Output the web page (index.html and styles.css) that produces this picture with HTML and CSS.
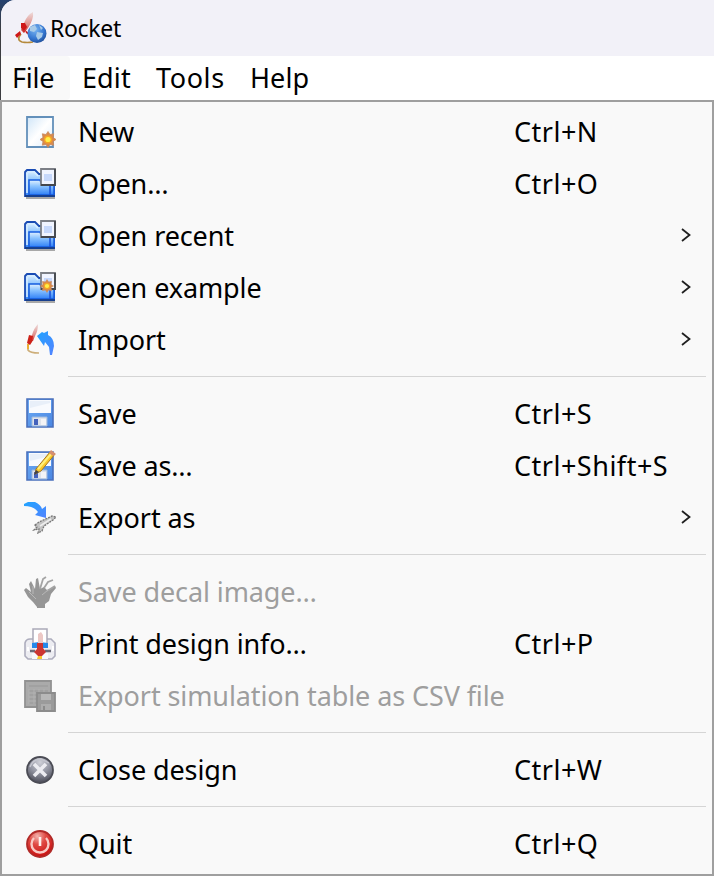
FILE: index.html
```html
<!DOCTYPE html>
<html lang="en">
<head>
<meta charset="utf-8">
<title>Rocket</title>
<link rel="stylesheet" href="styles.css">
</head>
<body>
<svg class="defs" width="0" height="0" aria-hidden="true">
  <defs>
    <linearGradient id="blue" x1="0" y1="0" x2="0" y2="1"><stop offset="0" stop-color="#e2f2ff"/><stop offset=".4" stop-color="#8cc4ff"/><stop offset="1" stop-color="#2f80f6"/></linearGradient>
    <linearGradient id="paper" x1="0" y1="0" x2="1" y2="1"><stop offset="0" stop-color="#cfe5f8"/><stop offset=".5" stop-color="#fff"/><stop offset="1" stop-color="#dcecfb"/></linearGradient>
    <linearGradient id="disk" x1="0" y1="0" x2="1" y2="1"><stop offset="0" stop-color="#6cabf4"/><stop offset="1" stop-color="#4a86e2"/></linearGradient>
    <linearGradient id="arrow" x1="0" y1="0" x2="1" y2="1"><stop offset="0" stop-color="#20a4ff"/><stop offset="1" stop-color="#5283ff"/></linearGradient>
    <linearGradient id="rocket" x1="0" y1="1" x2="0" y2="0"><stop offset="0" stop-color="#c82020"/><stop offset=".4" stop-color="#e0908a"/><stop offset="1" stop-color="#eedddd"/></linearGradient>
    <radialGradient id="grey" cx=".5" cy=".2" r=".8"><stop offset="0" stop-color="#cfd0d8"/><stop offset=".5" stop-color="#9496a3"/><stop offset="1" stop-color="#4a4b57"/></radialGradient>
    <radialGradient id="red" cx=".4" cy=".2" r=".8"><stop offset="0" stop-color="#f3b4ae"/><stop offset=".4" stop-color="#e04a44"/><stop offset="1" stop-color="#c81010"/></radialGradient>
    <radialGradient id="earth" cx=".4" cy=".3" r=".8"><stop offset="0" stop-color="#7ab6f2"/><stop offset=".6" stop-color="#3475d0"/><stop offset="1" stop-color="#1d468c"/></radialGradient>
    <g id="gear"><path d="M0-8L2-5L5.700-5.700L5-2L8 0L5 2L5.700 5.700L2 5L0 8L-2 5L-5.700 5.700L-5 2L-8 0L-5-2L-5.700-5.700L-2-5Z" fill="#d98a4c" stroke="#c88a60" stroke-width=".8"/><circle r="4" fill="#f6a623"/><circle r="2.600" fill="#fff04a"/></g>
    <g id="folder">
      <path d="M2 30H31" stroke="#a8a8a8" stroke-width="2"/>
      <path d="M1 4L3 2H11L15 6H30V28H1Z" fill="url(#blue)" stroke="#1a4cb4" stroke-width="1.800"/>
      <path d="M3 5V25M4 4H10L14 8" fill="none" stroke="#d7eeff" stroke-width="1.600"/>
      <path d="M5 27V12H16L18 17H30V27Z" fill="url(#blue)" stroke="#155ce0" stroke-width="1.500"/>
      <path d="M26 17V27" stroke="#1850d8" stroke-width="1.500"/>
      <path d="M1 28H31" stroke="#173e86" stroke-width="1.700"/>
      <path d="M17 1H31V17H17Z" fill="#f0f4ff" stroke="#7c7f86" stroke-width="1.800"/>
      <path d="M31 1V17H17" fill="none" stroke="#44474d" stroke-width="1.800"/>
      <path d="M20 6H28V13H20Z" fill="#c6d8fb"/>
    </g>
    <g id="floppy">
      <path d="M3 1H29V29H3Z" fill="url(#disk)" stroke="#4a70bc" stroke-width="1.600"/>
      <path d="M5 2H27V15H5Z" fill="#f8fafe"/>
      <path d="M6 3H26V5L6 10Z" fill="#e8eff9"/>
      <path d="M8 19H23V28H8Z" fill="#dfe3eb" stroke="#9cb8de"/>
      <path d="M10 21H14V27H10Z" fill="#4462bc"/>
      <path d="M17 21H22V27H17Z" fill="#f4f4f6"/>
    </g>
  </defs>
</svg>

<div class="desktop">
<div class="window">
  <header class="titlebar">
    <svg class="app-icon" viewBox="0 0 32 32">
      <path d="M6 22Q1 28 7 30Q12 31 18 30" fill="none" stroke="#b58a3c" stroke-width="1.700"/>
      <path d="M18 0Q12 3 9 11L6 18L9 21L13 16Q19 7 18 0Z" fill="url(#rocket)"/>
      <path d="M6 11L10 11L12 15L9 19L6 16ZM5 19L0 23L2 26L6 22ZM10 18L14 21L15 24L11 21Z" fill="#ce1818"/>
      <circle cx="22" cy="21.500" r="9.500" fill="url(#earth)"/>
      <path d="M15 15L20 13L22 17L19 20L15 19ZM22 20L28 21L27 25L23 28L21 24ZM24 13L28 16L26 18Z" fill="#a9cbe8"/>
    </svg>
    <h1 class="title">Rocket</h1>
  </header>
  <nav class="menubar">
    <span class="menu-head active">File</span>
    <span class="menu-head edit">Edit</span>
    <span class="menu-head tools">Tools</span>
    <span class="menu-head">Help</span>
  </nav>
</div>
</div>

<main class="menu">
  <div class="item">
    <svg class="icon" viewBox="0 0 32 32"><path d="M3 1H29V31H3Z" fill="url(#paper)" stroke="#6390ba" stroke-width="1.800"/><use href="#gear" x="24" y="23.500"/></svg>
    <span class="label">New</span><span class="keys">Ctrl+N</span>
  </div>
  <div class="item">
    <svg class="icon" viewBox="0 0 32 32"><use href="#folder"/></svg>
    <span class="label">Open…</span><span class="keys">Ctrl+O</span>
  </div>
  <div class="item">
    <svg class="icon" viewBox="0 0 32 32"><use href="#folder"/></svg>
    <span class="label">Open recent</span><svg class="chevron" viewBox="0 0 10 16"><path d="M1 2L8.500 8L1 14"/></svg>
  </div>
  <div class="item">
    <svg class="icon" viewBox="0 0 32 32"><use href="#folder"/><g transform="translate(23 14) scale(.8)"><use href="#gear"/></g></svg>
    <span class="label">Open example</span><svg class="chevron" viewBox="0 0 10 16"><path d="M1 2L8.500 8L1 14"/></svg>
  </div>
  <div class="item">
    <svg class="icon" viewBox="0 0 32 32">
      <path d="M4 20V26Q6 29 15 29" fill="none" stroke="#cdae79" stroke-width="1.700"/>
      <path d="M14 0Q10 4 8 11L6 18L9 17L11 12Q14 7 14 0Z" fill="url(#rocket)"/>
      <path d="M5 11L9 12L8 18L6 21L3 19Z" fill="#cd2218"/><path d="M3 20H5V25H3Z" fill="#ecad34"/>
      <path d="M13 12L18 8L20 9L24 7V11Q30 14 30 22L28 31H26L25 23L21 18L20 22Z" fill="url(#arrow)"/>
    </svg>
    <span class="label">Import</span><svg class="chevron" viewBox="0 0 10 16"><path d="M1 2L8.500 8L1 14"/></svg>
  </div>
  <hr class="rule">
  <div class="item">
    <svg class="icon" viewBox="0 0 32 32"><use href="#floppy"/></svg>
    <span class="label">Save</span><span class="keys">Ctrl+S</span>
  </div>
  <div class="item">
    <svg class="icon" viewBox="0 0 32 32"><use href="#floppy" y="1"/><path d="M12 19L26 2L31 4L17 21L11 24Z" fill="#fbc92c" stroke="#a57620" stroke-width="1"/><path d="M14 19L27 4" stroke="#fff07a" stroke-width="2"/><path d="M27 0L32 4L29 6L25 3Z" fill="#d68f70"/><path d="M12 20L15 22L10 25Z" fill="#444"/></svg>
    <span class="label">Save as…</span><span class="keys">Ctrl+Shift+S</span>
  </div>
  <div class="item">
    <svg class="icon" viewBox="0 0 32 32">
      <path d="M0 2L4 0H11Q17 3 18 7L22 4V16L11 13L14 10Q10 4 0 4Z" fill="url(#arrow)"/>
      <path d="M11 23L15 20L28 14L32 15L29 18L20 24L18 29L14 31L15 27L10 28L13 25Z" fill="#c4c4c4" stroke="#777" stroke-width="1.300" stroke-dasharray="2 1"/><path d="M16 24L27 17" stroke="#eee" stroke-width="1.500"/>
    </svg>
    <span class="label">Export as</span><svg class="chevron" viewBox="0 0 10 16"><path d="M1 2L8.500 8L1 14"/></svg>
  </div>
  <hr class="rule">
  <div class="item disabled">
    <svg class="icon" viewBox="0 0 32 32"><path d="M13 31L9 26L4 21L0 14L2 12L7 16L5 8L7 5L11 13L12 3L14 2L16 13L20 11L23 14L27 13L31 10L32 12L27 18L25 25L21 28V32H13Z" fill="#969696"/><path d="M16 13L19 3L22 1M20 12L24 6L29 4M23 15L31 10" fill="none" stroke="#a4a4a4" stroke-width="1.800"/><path d="M9 10V18M24 14L18 19M5 16L12 23" stroke="#b8b8b8" stroke-width="1"/></svg>
    <span class="label">Save decal image…</span>
  </div>
  <div class="item">
    <svg class="icon" viewBox="0 0 32 32">
      <path d="M1 15Q2 11 6 11H27L31 15V28L28 31H4L1 28Z" fill="#ededf2" stroke="#adadbd" stroke-width="1.600"/>
      <path d="M9 1H23V17H9Z" fill="#fff" stroke="#aaa9b8" stroke-width="1.500"/>
      <path d="M8 15L15 14L24 15V20H8Z" fill="#2589ea"/><path d="M6 23H11M21 23H27" stroke="#6a6a78" stroke-width="2.400"/>
      <path d="M4 19V23M29 18V23" stroke="#fff" stroke-width="2"/>
      <path d="M8 25H24V31H8Z" fill="#f8f8fc"/><path d="M14 15V6L17 4L19 7V16Z" fill="#ecc8c5"/><path d="M13 15H19V20L22 24L18 28H14L10 24L13 21Z" fill="#cc3532"/><path d="M14 28H18V31H13Z" fill="#fac42f"/>
    </svg>
    <span class="label">Print design info…</span><span class="keys">Ctrl+P</span>
  </div>
  <div class="item disabled">
    <svg class="icon" viewBox="0 0 32 32">
      <path d="M1 1H27V27H1Z" fill="#aaa" stroke="#929292" stroke-width="1.800"/><path d="M5 6H24M5 11H24M5 15H24M5 19H24M5 23H24" stroke="#989898" stroke-width="1.200"/><path d="M5 9V24M10 9V24M15 9V24M20 9V24" stroke="#b5b5b5" stroke-width=".8"/>
      <path d="M13 13H31V31H13Z" fill="#9b9b9b" stroke="#8c8c8c" stroke-width="1.800"/><path d="M17 14H27V20H17Z" fill="#b8b8b8"/><path d="M17 24H27V30H17Z" fill="#adadad"/><path d="M19 26H21V30H19Z" fill="#8b8b8b"/>
    </svg>
    <span class="label">Export simulation table as CSV file</span>
  </div>
  <hr class="rule">
  <div class="item">
    <svg class="icon" viewBox="0 0 32 32"><circle cx="16" cy="16" r="13" fill="url(#grey)" stroke="#4b4c55" stroke-width="1.800"/><path d="M10 10L22 22M22 10L10 22" stroke="#ececf1" stroke-width="3.600"/><path d="M6 13Q9 5 17 5L25 9" fill="none" stroke="#c6c7d0" stroke-width="1.300"/></svg>
    <span class="label">Close design</span><span class="keys">Ctrl+W</span>
  </div>
  <hr class="rule">
  <div class="item">
    <svg class="icon" viewBox="0 0 32 32"><circle cx="16" cy="16" r="13" fill="url(#red)" stroke="#b02a28" stroke-width="1.800"/><path d="M10 10A8.500 8.500 0 1 0 22 10" fill="none" stroke="#f8cbc6" stroke-width="2.400"/><path d="M16 9V18" stroke="#fff0ed" stroke-width="2.600"/></svg>
    <span class="label">Quit</span><span class="keys">Ctrl+Q</span>
  </div>
</main>
</body>
</html>
```
FILE: styles.css
```css
* { box-sizing: border-box; }
body {
  margin: 0;
  width: 714px;
  height: 876px;
  overflow: hidden;
  background: #f9f9f9;
  color: #000;
  font-family: "Noto Sans", "Open Sans", sans-serif;
  font-size: 27px;
}
.defs { display: block; }
.desktop { height: 100px; padding-left: 1px; background: linear-gradient(#26426f, #3b3c40 30px); }
.window { height: 100px; border-top-left-radius: 15px; overflow: hidden; background: #fff; }
.titlebar { display: flex; align-items: center; height: 56px; padding-left: 14px; background: #f2f1f8; }
.app-icon { width: 32px; height: 32px; }
.title { margin: 0 0 0 3px; font-size: 23px; font-weight: 400; line-height: 32px; letter-spacing: -.3px; }
.menubar { display: flex; height: 44px; line-height: 44px; letter-spacing: .1px; }
.menu-head { padding: 0 15px 0 11px; }
.active { width: 69px; background: #f9f9f9; border-radius: 0 4px 4px 0; letter-spacing: -.2px; }
.edit { width: 75px; padding-left: 12px; }
.tools { width: 94px; letter-spacing: .6px; }
.menu { height: 776px; padding: 4px 6px 0 22px; border: 2px solid #9f9f9f; background: #f9f9f9; line-height: 52px; }
.item { display: flex; align-items: center; height: 52px; padding-right: 14px; }
.icon { flex: none; width: 32px; height: 32px; }
.label { width: 436px; margin-left: 22px; white-space: nowrap; letter-spacing: -.1px; }
.keys { white-space: nowrap; letter-spacing: .5px; }
.chevron { width: 10px; height: 16px; margin: 0 1px 2px auto; fill: none; stroke: #202020; stroke-width: 1.8; }
.disabled { color: #9e9e9e; }
.rule { height: 1px; margin: 10px 0 11px 44px; border: 0; background: #d5d5d5; }
```
